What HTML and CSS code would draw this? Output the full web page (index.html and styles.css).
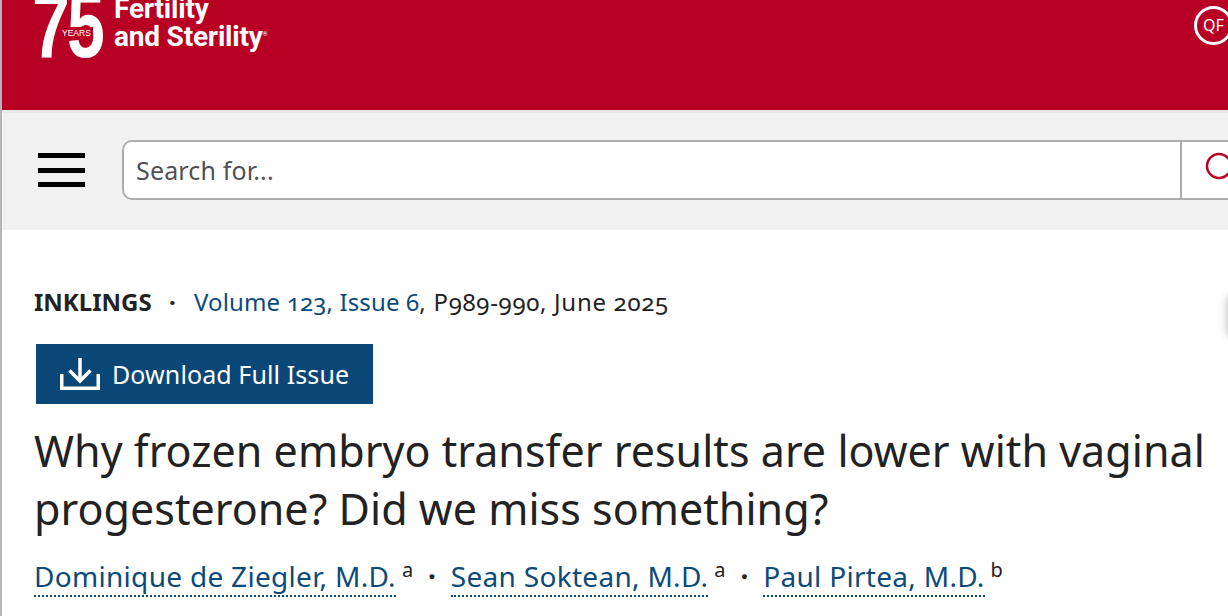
FILE: index.html
```html
<!DOCTYPE html>
<html lang="en">

<head>
    <meta charset="UTF-8">
    <meta name="viewport" content="width=device-width, initial-scale=1.0">
    <title>Why frozen embryo transfer results are lower with vaginal progesterone?</title>
    <link rel="stylesheet" href="styles.css">
</head>

<body>

    <header class="brand-bar">
        <div class="logo">
            <div class="logo-mark">
                <span class="logo-75">75</span>
                <span class="logo-years">YEARS</span>
            </div>
            <div class="logo-name">
                <span>Fertility</span>
                <span>and Sterility<sup class="logo-reg">®</sup></span>
            </div>
        </div>
        <div class="qf-badge">QF</div>
    </header>

    <div class="search-bar">
        <button class="menu-btn" type="button" aria-label="Menu">
            <span></span>
            <span></span>
            <span></span>
        </button>
        <form class="search-form">
            <input class="search-input" type="text" placeholder="Search for...">
            <button class="search-btn" type="button" aria-label="Search">
                <svg width="34" height="34" viewBox="0 0 34 34">
                    <circle cx="17" cy="14" r="12" fill="none" stroke="#b70024" stroke-width="2.5" />
                </svg>
            </button>
        </form>
    </div>

    <main class="article">
        <div class="meta">
            <span class="meta-type">INKLINGS</span>
            <span class="meta-dot">·</span>
            <a class="meta-issue" href="#">Volume 123, Issue 6</a><span class="meta-pages">, P989-990, June 2025</span>
        </div>

        <a class="download-btn" href="#">
            <svg width="40" height="32" viewBox="0 0 40 32">
                <path d="M20 0v22M9.5 12.5L20 23l10.5-10.5" fill="none" stroke="#fff" stroke-width="3.5" />
                <path d="M1.75 16v14.25h36.5V16" fill="none" stroke="#fff" stroke-width="3.5" />
            </svg>
            Download Full Issue
        </a>

        <h1>Why frozen embryo transfer results are lower with vaginal progesterone? Did we miss something?</h1>

        <div class="authors">
            <a href="#">Dominique de Ziegler, M.D.</a><sup>a</sup>
            <span class="meta-dot">·</span>
            <a href="#">Sean Soktean, M.D.</a><sup>a</sup>
            <span class="meta-dot">·</span>
            <a href="#">Paul Pirtea, M.D.</a><sup>b</sup>
        </div>
    </main>

    <div class="edge-shadow"></div>

</body>

</html>
```

FILE: styles.css
```css
html,
body {
    height: 100%;
}

body {
    font-family: "Noto Sans", Arial, sans-serif;
    margin: 0;
    padding: 0;
    background-color: #fff;
    color: #222;
    border-left: 2px solid #b5b5b5;
    overflow: hidden;
    position: relative;
}

a {
    color: #0c4a7a;
    text-decoration: none;
}

.brand-bar {
    height: 110px;
    background-color: #b70024;
    color: #fff;
    display: flex;
    justify-content: space-between;
    overflow: hidden;
}

.logo {
    display: flex;
    margin-left: 30px;
    margin-top: -10px;
}

.logo-mark {
    position: relative;
    width: 82px;
    height: 70px;
}

.logo-75 {
    display: block;
    font-family: "Liberation Sans", Arial, sans-serif;
    font-weight: 700;
    font-size: 92px;
    line-height: 70px;
    letter-spacing: -4px;
    transform: scaleX(0.74);
    transform-origin: left center;
    white-space: nowrap;
}

.logo-years {
    position: absolute;
    left: 28px;
    top: 37px;
    padding: 1px 2px;
    background-color: #b70024;
    font-family: "Liberation Sans", Arial, sans-serif;
    font-size: 8.5px;
    line-height: 11px;
}

.logo-name {
    display: flex;
    flex-direction: column;
    font-family: Roboto, Arial, sans-serif;
    font-weight: 700;
    font-size: 28px;
    letter-spacing: -0.2px;
    line-height: 28px;
    margin-top: 5px;
}

.logo-reg {
    font-size: 6px;
    line-height: 0;
}

.qf-badge {
    flex-shrink: 0;
    box-sizing: border-box;
    width: 39px;
    height: 39px;
    margin: 6px -5px 0 0;
    border: 3px solid #fff;
    border-radius: 50%;
    font-size: 16px;
    line-height: 33px;
    text-align: center;
}

.search-bar {
    box-sizing: border-box;
    height: 120px;
    background-color: #f1f1f1;
    border-top: 3px solid #e9e9e9;
    display: flex;
    align-items: flex-start;
}

.menu-btn {
    width: 47px;
    margin: 40px 0 0 36px;
    padding: 0;
    border: 0;
    background: none;
    display: flex;
    flex-direction: column;
    gap: 9.5px;
}

.menu-btn span {
    display: block;
    height: 5px;
    background-color: #000;
    width: 47px;
}

.search-form {
    flex: 1;
    margin: 27px 0 0 37px;
    display: flex;
    height: 60px;
    background-color: #fff;
    border: 2px solid #adadad;
    border-right: 0;
    border-radius: 10px 0 0 10px;
    box-sizing: border-box;
}

.search-input {
    flex: 1;
    border: 0;
    outline: 0;
    background: none;
    font-family: inherit;
    font-size: 25px;
    letter-spacing: 0.15px;
    padding: 0 12px;
    border-radius: 10px 0 0 10px;
}

.search-input::placeholder {
    color: #505055;
    opacity: 1;
}

.search-btn {
    width: 48px;
    border: 0;
    border-left: 2px solid #adadad;
    background: none;
    padding: 0 0 0 20px;
    overflow: hidden;
}

.article {
    padding: 56px 10px 0 32px;
}

.meta {
    font-size: 24px;
    line-height: 32px;
    font-variant-numeric: oldstyle-nums;
}

.meta-type {
    font-weight: 700;
}

.meta-dot {
    margin: 0 7px;
    font-weight: 700;
}

.meta .meta-dot {
    margin: 0 12px 0 11px;
}

.meta-issue {
    letter-spacing: 0.15px;
}

.meta-pages {
    letter-spacing: 0.7px;
}

.download-btn {
    display: inline-flex;
    align-items: center;
    gap: 12px;
    height: 60px;
    margin: 26px 0 0 2px;
    padding: 0 24px;
    background-color: #0a4676;
    color: #fff;
    font-size: 25px;
    letter-spacing: 0.1px;
}

h1 {
    margin: 18px 0 0;
    font-weight: 400;
    font-size: 43px;
    line-height: 58px;
    letter-spacing: 0.04px;
    color: #222;
}

.authors {
    margin-top: 18px;
    font-size: 28px;
    line-height: 40px;
    letter-spacing: 0.3px;
}

.authors a {
    border-bottom: 2px dotted #0c4a7a;
}

.authors sup {
    font-size: 20px;
    margin-left: 6px;
    line-height: 0;
}

.edge-shadow {
    position: absolute;
    top: 296px;
    right: -10px;
    width: 10px;
    height: 40px;
    box-shadow: 0 0 10px rgba(0, 0, 0, 0.3);
}
```
